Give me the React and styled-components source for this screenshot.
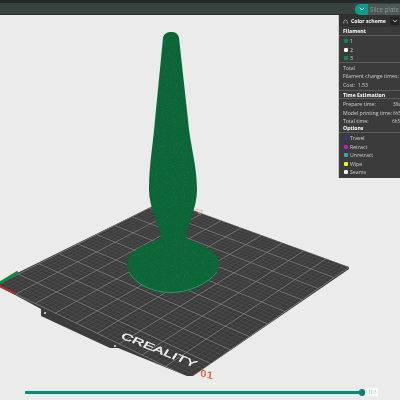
import React, { useMemo } from "react";
import styled, { createGlobalStyle } from "styled-components";

const Global = createGlobalStyle`
  html, body { margin: 0; padding: 0; background: #ebebeb; }
  #root { width: 400px; height: 400px; overflow: hidden; }
`;
const Page = styled.div`
  width: 400px; height: 400px; display: flex; flex-direction: column;
  font-family: "Open Sans", "Liberation Sans", sans-serif; overflow: hidden;
`;
const TopBar = styled.header`
  height: 15px; flex: none; display: flex; justify-content: flex-end; align-items: center;
  background: linear-gradient(#23282a 0 3px, #38423f 3px 14px, #2c3231 14px);
  padding-top: 3px; box-sizing: border-box;
`;
const SliceToggle = styled.div`
  width: 13px; height: 11px; border-radius: 5px 0 0 5px; background: #0e9c88;
  display: flex; align-items: center; justify-content: center;
`;
const SliceButton = styled.div`
  width: 32px; height: 11px; background: #4d5856; color: #8b9694; font-size: 6.2px;
  line-height: 11px; padding-left: 2px; box-sizing: border-box; white-space: nowrap;
  filter: blur(.3px);
`;
const Viewport = styled.main`
  position: relative; flex: 1; background: #ebebeb;
`;
const Scene = styled.svg`
  position: absolute; left: 0; top: -15px; width: 400px; height: 400px; filter: blur(.35px);
`;
const Panel = styled.aside`
  position: absolute; top: 0; right: 0; width: 62px; height: 163px; box-sizing: border-box;
  background: #3a3b3a; border-left: 1px solid #c9c9c9; color: #d2d2d2; font-size: 5.2px;
  display: flex; flex-direction: column; white-space: nowrap; overflow: hidden; filter: blur(.25px);
`;
const PanelHead = styled.div`
  height: 12px; flex: none; display: flex; align-items: center; padding-left: 4px; gap: 3px;
  background: #313231; color: #fff; font-weight: 700; font-size: 5.2px;
`;
const SchemeDrop = styled.div`
  width: 9px; height: 8px; margin-left: auto; margin-right: 1px; background: #232423;
  display: flex; align-items: center; justify-content: center;
`;
const Section = styled.div`
  height: ${p => p.$h}px; flex: none; display: flex; align-items: center; padding-left: 4px;
  color: #fff; font-weight: 700; box-sizing: border-box; border-bottom: 1px solid #5b5c5b;
`;
const Row = styled.div`
  height: ${p => p.$h || 8.2}px; flex: none; display: flex; align-items: center; gap: 1px;
  margin-top: ${p => p.$top || 0}px;
  padding-left: ${p => (p.$swatch ? 5 : 4)}px; color: #d0d0d0;
`;
const SwatchRow = styled(Row)`
  gap: 2px;
`;
const Swatch = styled.span`
  width: 4px; height: 4px; flex: none; background: ${p => p.$c}; border-radius: 1px;
`;
const Value = styled.span`
  margin-left: auto; flex: none; font-size: 4.4px;
`;
const Rule = styled.div`
  height: 1px; flex: none; background: #5b5c5b; margin: ${p => p.$m || "2px 0"};
`;
const Slider = styled.div`
  position: absolute; left: 25px; bottom: 4px; display: flex; align-items: center; gap: 5px;
`;
const Track = styled.div`
  position: relative; width: 337px; height: 3px; background: #11877a;
  box-shadow: 0 0 0 1px #c9f5ee; border-radius: 1px;
`;
const Thumb = styled.div`
  position: absolute; right: -3px; top: -2px; width: 6px; height: 7px; border-radius: 3px; background: #0f7d70;
`;
const SliderValue = styled.div`
  background: #fff; color: #8fd8cc; font-size: 5px; line-height: 8px; padding: 0 1px; border-radius: 1px;
  filter: blur(.25px);
`;
const Brand = styled.text`
  font-family: "Liberation Sans", sans-serif; font-weight: 400; font-size: 10px; fill: #f4f4f4;
  stroke: #f4f4f4; stroke-width: .3px;
`;
const PlateNo = styled.text`
  font-family: "Liberation Sans", sans-serif; font-weight: 700; font-size: 10px; fill: #e5693a; letter-spacing: .4px;
`;

// homography mapping the unit square to the four plate corners
function homography([a, b, c, d]) {
  const dx1 = b[0] - c[0], dx2 = d[0] - c[0], sx = a[0] - b[0] + c[0] - d[0];
  const dy1 = b[1] - c[1], dy2 = d[1] - c[1], sy = a[1] - b[1] + c[1] - d[1];
  const det = dx1 * dy2 - dx2 * dy1;
  const g = (sx * dy2 - dx2 * sy) / det, h = (dx1 * sy - sx * dy1) / det;
  return (u, v) => {
    const w = g * u + h * v + 1;
    return [
      ((b[0] - a[0] + g * b[0]) * u + (d[0] - a[0] + h * d[0]) * v + a[0]) / w,
      ((b[1] - a[1] + g * b[1]) * u + (d[1] - a[1] + h * d[1]) * v + a[1]) / w,
    ];
  };
}

function gridPaths() {
  const H = homography([[165, 200], [349, 267], [190, 378], [-3, 285]]);
  const N = 45;
  let minor = "", major = "";
  for (let i = 0; i <= N; i++) {
    const t = i / N;
    const [a, b] = [H(t, 0), H(t, 1)];
    const [c, d] = [H(0, t), H(1, t)];
    const seg = `M${a[0].toFixed(1)} ${a[1].toFixed(1)}L${b[0].toFixed(1)} ${b[1].toFixed(1)}M${c[0].toFixed(1)} ${c[1].toFixed(1)}L${d[0].toFixed(1)} ${d[1].toFixed(1)}`;
    if (i % 5 === 0) major += seg; else minor += seg;
  }
  return { minor, major };
}

const PLATE = "M165 200L349 267L349 269L193 376L187 376L118 348L110 348L41 316L41 309L-3 285L-3 283Z";
const BODY = "M163 38C164 33 168 32 171 32C175 32 178 33 179 38L188 120C190 145 197 165 197 190C197 208 188 222 186 238C190 241 205 245 213 252C220 258 221 266 217 272C208 286 188 293 171 293C153 293 135 285 129 272C125 264 128 256 136 250C144 244 157 241 161 238C159 222 149 208 149 190C149 165 153 145 155 120Z";

function PlateScene() {
  const { minor, major } = useMemo(gridPaths, []);
  return (
    <Scene viewBox="0 0 400 400" aria-hidden="true">
      <defs>
        <clipPath id="plate"><path d={PLATE} /></clipPath>
        <filter id="speck" x="0" y="0" width="100%" height="100%">
          <feTurbulence type="fractalNoise" baseFrequency="1.1" numOctaves="2" seed="4" />
          <feColorMatrix values="0 0 0 0 .2  0 0 0 0 .6  0 0 0 0 .38  0 0 0 2 -1.05" />
          <feComposite in2="SourceAlpha" operator="in" />
        </filter>
      </defs>
      <path d={PLATE} fill="#3b3c3b" />
      <g clipPath="url(#plate)" fill="none">
        <path d={minor} stroke="#585958" strokeWidth=".45" />
        <path d={major} stroke="#8a8b8a" strokeWidth=".7" />
      </g>
      <circle cx="45" cy="313" r="1" fill="#e8e8e8" />
      <circle cx="115" cy="346" r="1" fill="#e8e8e8" />
      <path d="M0 283L18 272" stroke="#128a3a" strokeWidth="3" />
      <path d="M0 286L16 294" stroke="#a62f2b" strokeWidth="2.5" />
      <Brand transform="matrix(.93 .37 -.55 .83 120 338)" textLength="80" lengthAdjust="spacingAndGlyphs">CREALITY</Brand>
      <PlateNo transform="matrix(1.1 .3 -.1 1 200 376)">01</PlateNo>
      <path d="M196 209L203 211L199 214Z" fill="none" stroke="#e9a184" strokeWidth=".7" />
      <path d={BODY} fill="#0c6537" />
      <path d="M129 272C135 284 153 292.5 171 292.5C188 292.5 208 284 217 272" fill="none" stroke="#2c9b62" strokeWidth=".9" />
      <path d={BODY} fill="#000" filter="url(#speck)" opacity=".18" />
    </Scene>
  );
}

const Chevron = ({ c }) => (
  <svg width="6" height="4" viewBox="0 0 6 4"><path d="M.8.8L3 3L5.2.8" fill="none" stroke={c} strokeWidth="1" /></svg>
);

export default function App() {
  return (
    <Page>
      <Global />
      <TopBar>
        <SliceToggle><Chevron c="#dff" /></SliceToggle>
        <SliceButton>Slice plate</SliceButton>
      </TopBar>
      <Viewport>
        <PlateScene />
        <Panel>
          <PanelHead>
            <svg width="5" height="5" viewBox="0 0 6 6"><path d="M1 5.5V2.5L3 .8L5 2.5V5.5" fill="none" stroke="#aaa" strokeWidth="1" /></svg>
            Color scheme
            <SchemeDrop><Chevron c="#bbb" /></SchemeDrop>
          </PanelHead>
          <Section $h={9}>Filament</Section>
          <SwatchRow $swatch $h={8.4} $top={1}><Swatch $c="#0d8a45" />1</SwatchRow>
          <SwatchRow $swatch $h={8.4}><Swatch $c="#ffffff" />2</SwatchRow>
          <SwatchRow $swatch $h={8.4}><Swatch $c="#0d8a45" />3</SwatchRow>
          <Rule $m="0 0 1px" />
          <Row>Total</Row>
          <Row>Filament change times:</Row>
          <Row>Cost:&nbsp;&nbsp;1.53</Row>
          <Rule $m="1.5px 0 0" />
          <Section $h={8}>Time Estimation</Section>
          <Row $top={1}>Prepare time:<Value>38s</Value></Row>
          <Row>Model printing time:<Value>6h5</Value></Row>
          <Row>Total time:<Value>6h5</Value></Row>
          <Section $h={8}>Options</Section>
          <SwatchRow $swatch $h={8.5} $top={1}><Swatch $c="#2c3a8f" />Travel</SwatchRow>
          <SwatchRow $swatch $h={8.5}><Swatch $c="#c01cc0" />Retract</SwatchRow>
          <SwatchRow $swatch $h={8.5}><Swatch $c="#3aa0c0" />Unretract</SwatchRow>
          <SwatchRow $swatch $h={8.5}><Swatch $c="#f2f21c" />Wipe</SwatchRow>
          <SwatchRow $swatch $h={8.5}><Swatch $c="#f2f2f2" />Seams</SwatchRow>
        </Panel>
        <Slider>
          <Track><Thumb /></Track>
          <SliderValue>103</SliderValue>
        </Slider>
      </Viewport>
    </Page>
  );
}
